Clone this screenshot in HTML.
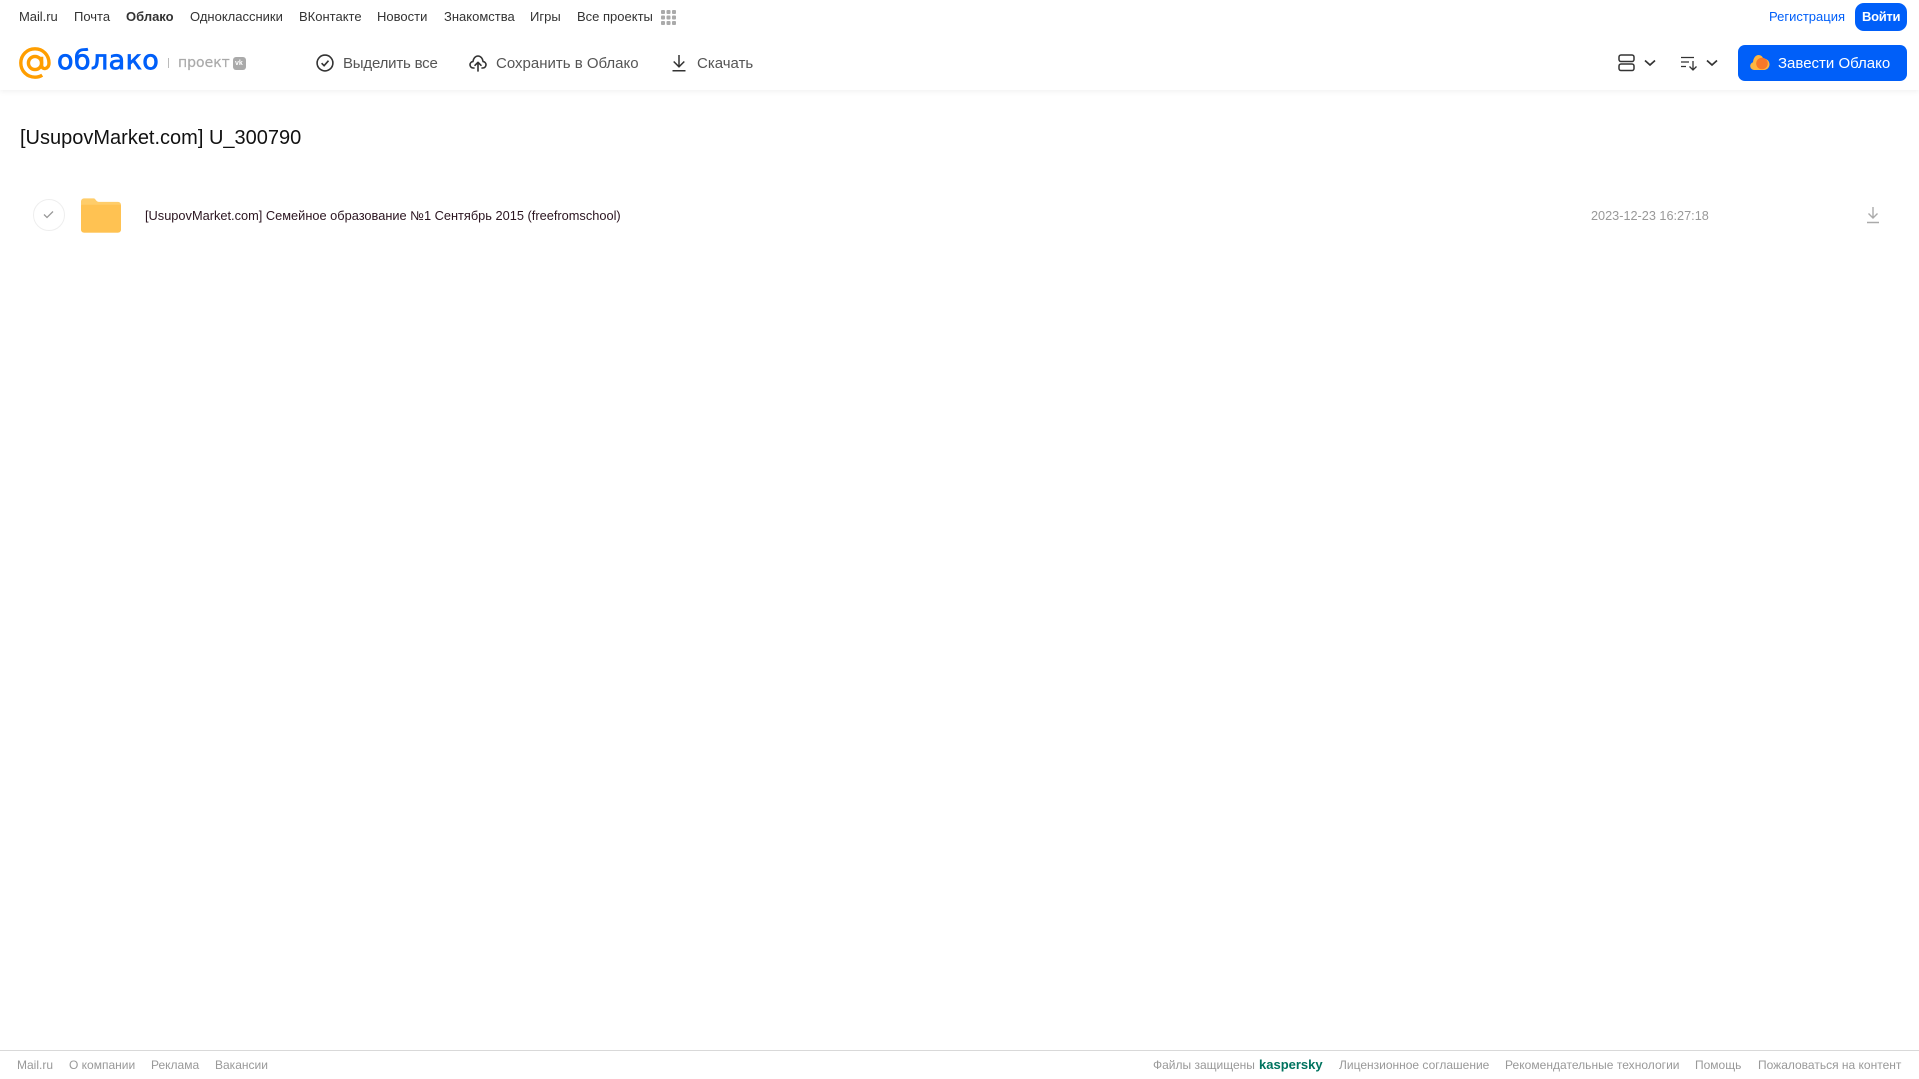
<!DOCTYPE html>
<html lang="ru"><head><meta charset="utf-8"><title>Облако</title>
<style>
html,body{margin:0;padding:0;background:#fff}
body{width:1919px;height:1079px;position:relative;overflow:hidden;font-family:"Liberation Sans",Arial,sans-serif}
.t{position:absolute;white-space:nowrap;line-height:20px}
.n{top:7px;font-size:13px;color:#333}
.a{top:54px;font-size:15px;color:#555;line-height:20px}
.f{top:1055px;font-size:12px;color:#999}
svg{position:absolute;display:block}
#hdr{position:absolute;left:0;top:0;width:1919px;height:90px;background:#fff;box-shadow:0 1px 6px rgba(0,0,0,.07)}
</style></head><body>
<div id="hdr"></div>
<span class="t n" style="left:19px;letter-spacing:-.05px">Mail.ru</span>
<span class="t n" style="left:74px">Почта</span>
<span class="t n" style="left:126px;font-weight:bold">Облако</span>
<span class="t n" style="left:190px">Одноклассники</span>
<span class="t n" style="left:299px">ВКонтакте</span>
<span class="t n" style="left:377px">Новости</span>
<span class="t n" style="left:444px">Знакомства</span>
<span class="t n" style="left:530px">Игры</span>
<span class="t n" style="left:577px">Все проекты</span>
<svg style="left:661px;top:10px" width="15" height="15" fill="#aaa"><rect x="0" y="0" width="4" height="4" rx="1"/><rect x="5.5" y="0" width="4" height="4" rx="1"/><rect x="11" y="0" width="4" height="4" rx="1"/><rect x="0" y="5.5" width="4" height="4" rx="1"/><rect x="5.5" y="5.5" width="4" height="4" rx="1"/><rect x="11" y="5.5" width="4" height="4" rx="1"/><rect x="0" y="11" width="4" height="4" rx="1"/><rect x="5.5" y="11" width="4" height="4" rx="1"/><rect x="11" y="11" width="4" height="4" rx="1"/></svg>
<span class="t n" style="left:1769px;color:#005ff9">Регистрация</span>
<div style="position:absolute;left:1855px;top:3px;width:52px;height:28px;border-radius:9px;background:#005ff9"></div>
<span class="t n" style="left:1862px;color:#fff;font-weight:bold;font-size:13px;letter-spacing:-.3px">Войти</span>

<svg style="left:19px;top:47px" width="32" height="32" viewBox="0 0 32 32" fill="none" stroke="#ff9e00" stroke-width="3.400"><circle cx="16" cy="16" r="6.600"/><path d="M22.600 9.800v8.200c0 5.400 7.400 4.600 7.400-2C30 8 24 1.800 16 1.800S1.800 8 1.800 16 8 30.200 16 30.200c3 0 5.200-.7 7.200-2"/></svg>
<span class="t" style="left:57px;top:44px;font-family:'DejaVu Sans',sans-serif;font-size:27px;line-height:34px;color:#005ff9;letter-spacing:.4px;-webkit-text-stroke:.8px #005ff9">облако</span>
<div style="position:absolute;left:168px;top:58px;width:1px;height:10px;background:#bbb"></div>
<span class="t" style="left:178px;top:53px;font-family:'DejaVu Sans',sans-serif;font-size:14px;color:#aaa;-webkit-text-stroke:.2px #aaa">проект</span>
<div style="position:absolute;left:233px;top:57px;width:13px;height:13px;border-radius:3px;background:#aaa"></div>
<span class="t" style="left:235px;top:59px;font-size:7px;line-height:9px;font-weight:bold;color:#fff">vk</span>

<svg style="left:316px;top:54px" width="18" height="18" viewBox="0 0 18 18" fill="none" stroke="#333" stroke-width="1.600"><circle cx="9" cy="9" r="7.900"/><path d="M5.600 9.200l2.500 2.500 4.400-5"/></svg>
<span class="t a" style="left:343px;letter-spacing:-.2px">Выделить все</span>
<svg style="left:469px;top:54px" width="18" height="18" viewBox="0 0 18 18" fill="none" stroke="#333" stroke-width="1.600" stroke-linecap="round" stroke-linejoin="round"><path d="M5 14H4.200C2.200 14 1 12.400 1 10.800c0-1.700 1.200-3 2.900-3.200C4.300 4.500 6.300 2 9 2s4.700 2.500 5.100 5.600c1.700.2 2.900 1.500 2.900 3.200 0 1.600-1.200 3.200-3.200 3.200H13"/><path d="M9 17V8.500M6 11.300l3-3 3 3"/></svg>
<span class="t a" style="left:496px">Сохранить в Облако</span>
<svg style="left:671px;top:54px" width="16" height="18" viewBox="0 0 16 18" fill="none" stroke="#333" stroke-width="1.500"><path d="M8 1v11.500M2.700 7.500L8 12.800l5.300-5.300M1.500 16.800h13"/></svg>
<span class="t a" style="left:697px">Скачать</span>

<svg style="left:1618px;top:54px" width="17" height="18" viewBox="0 0 17 18" fill="none" stroke="#333" stroke-width="1.500"><rect x="1" y="1" width="15" height="6.500" rx="2"/><rect x="1" y="10" width="15" height="6.500" rx="2"/></svg>
<svg style="left:1644px;top:59px" width="12" height="8" viewBox="0 0 12 8" fill="none" stroke="#333" stroke-width="1.700"><path d="M1 1.500l5 4.500 5-4.500"/></svg>
<svg style="left:1681px;top:56px" width="17" height="15" viewBox="0 0 17 15" fill="none" stroke="#333" stroke-width="1.300"><path d="M0 1.500h13M0 6h8M0 10.500h5M12 5v9M8.500 10.500l3.500 3.500 3.500-3.500"/></svg>
<svg style="left:1706px;top:59px" width="12" height="8" viewBox="0 0 12 8" fill="none" stroke="#333" stroke-width="1.700"><path d="M1 1.500l5 4.500 5-4.500"/></svg>

<div style="position:absolute;left:1738px;top:45px;width:169px;height:36px;border-radius:7px;background:#005ff9"></div>
<svg style="left:1750px;top:54px" width="20" height="17" viewBox="0 0 20 17"><path d="M4 16a4 4 0 0 1-1-7.800C3.400 3.500 6 1 8.500 1c2.400 0 4 1.500 4.700 3.500 3.600 0 6.300 2.500 6.300 5.800 0 3.300-2.500 5.700-5.500 5.700z" fill="#ffb540"/><circle cx="12" cy="9.500" r="5.800" fill="#f7782a"/></svg>
<span class="t" style="left:1778px;top:54px;font-size:15px;color:#fff">Завести Облако</span>

<span class="t" style="left:20px;top:126px;font-size:20px;line-height:24px;color:#111">[UsupovMarket.com] U_300790</span>

<div style="position:absolute;left:33px;top:199px;width:30px;height:30px;border:1px solid #eee;border-radius:50%"></div>
<svg style="left:43px;top:210px" width="11" height="9" viewBox="0 0 11 9" fill="none" stroke="#999" stroke-width="1.300"><path d="M1 4.500l3 3 6-6"/></svg>
<svg style="left:81px;top:198px" width="40" height="35" viewBox="0 0 41 35"><path d="M3 0h10c2 0 2.500 3.500 5 3.500h20a3 3 0 0 1 3 3V32a3 3 0 0 1-3 3H3a3 3 0 0 1-3-3V3a3 3 0 0 1 3-3z" fill="#ffcd6a"/><path d="M0 8a1.500 1.500 0 0 1 1.500-1.500h38A1.500 1.500 0 0 1 41 8v24a3 3 0 0 1-3 3H3a3 3 0 0 1-3-3z" fill="#ffc252"/></svg>
<span class="t" style="left:145px;top:206px;font-size:12.8px;color:#2b1520">[UsupovMarket.com] Семейное образование №1 Сентябрь 2015 (freefromschool)</span>
<span class="t" style="left:1591px;top:206px;font-size:12.7px;color:#999">2023-12-23 16:27:18</span>
<svg style="left:1866px;top:206px" width="14" height="18" viewBox="0 0 14 18" fill="none" stroke="#aaa" stroke-width="1.400"><path d="M7 1v10.500M2.500 7.500l4.500 4.500 4.500-4.500M1 16.500h12"/></svg>

<div style="position:absolute;left:0;top:1050px;width:1919px;height:1px;background:#d9d9d9"></div>
<span class="t f" style="left:17px">Mail.ru</span>
<span class="t f" style="left:69px">О компании</span>
<span class="t f" style="left:151px">Реклама</span>
<span class="t f" style="left:215px">Вакансии</span>
<span class="t f" style="left:1153px">Файлы защищены</span>
<span class="t f" style="left:1259px;color:#00735f;font-weight:bold;font-size:13px">kaspersky</span>
<span class="t f" style="left:1339px">Лицензионное соглашение</span>
<span class="t f" style="left:1505px;letter-spacing:.03px">Рекомендательные технологии</span>
<span class="t f" style="left:1695px">Помощь</span>
<span class="t f" style="left:1758px">Пожаловаться на контент</span>
</body></html>
